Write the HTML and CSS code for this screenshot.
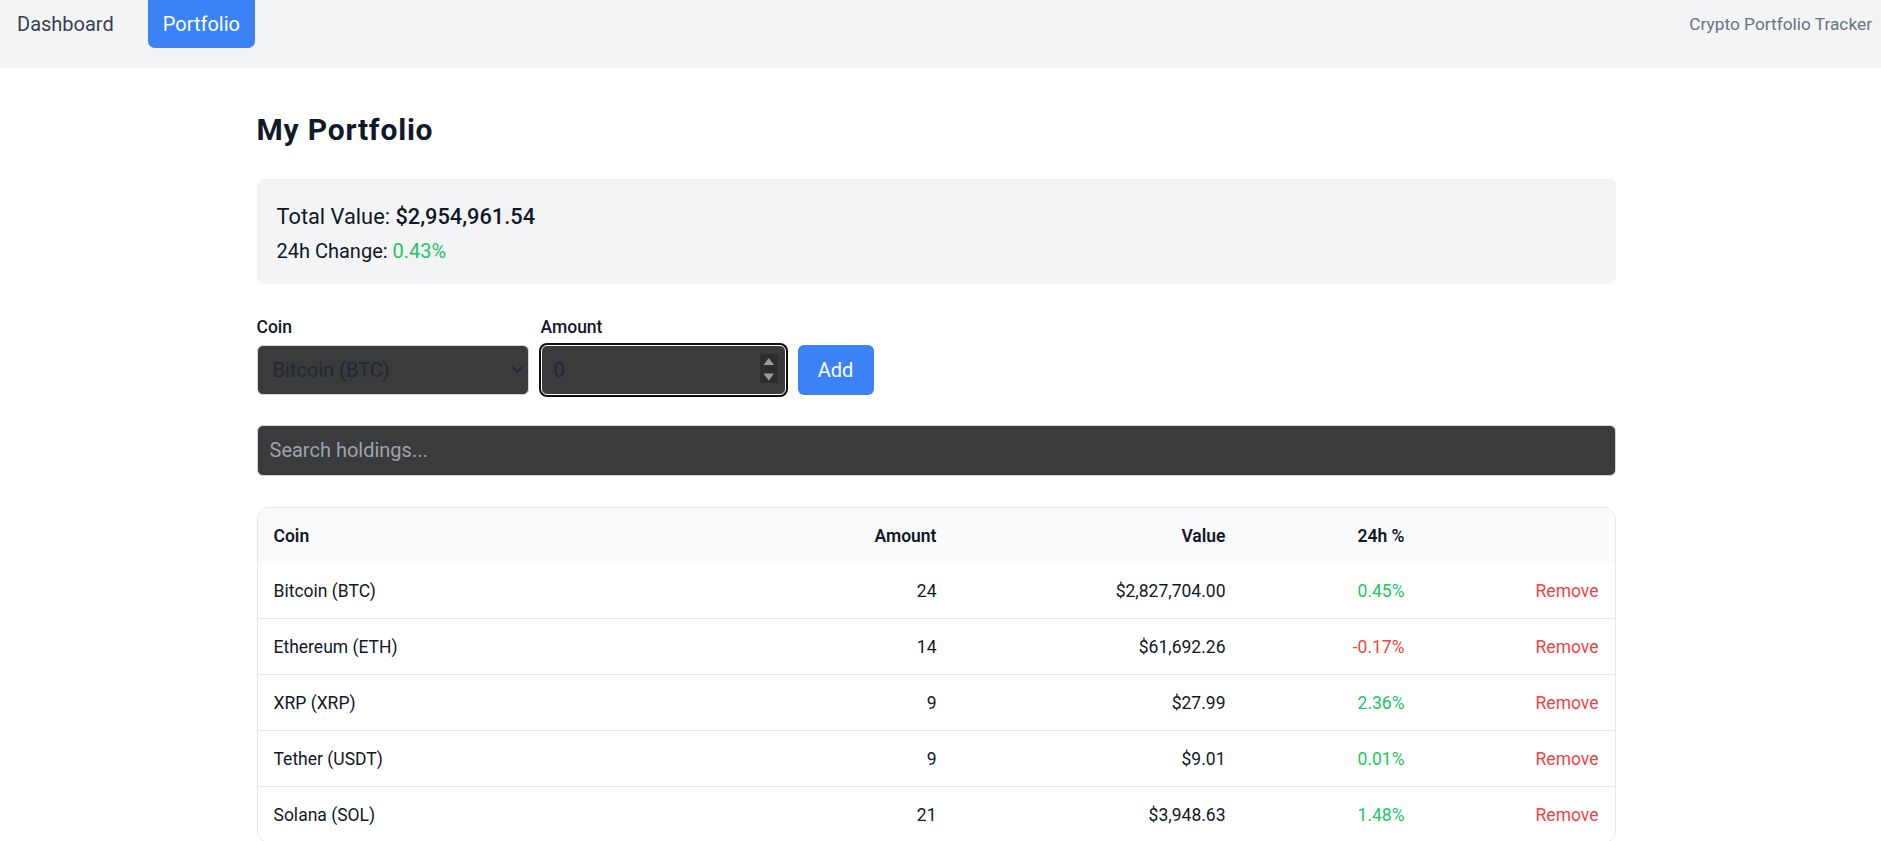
FILE: index.html
```html
<!DOCTYPE html>
<html lang="en">
<head>
<meta charset="utf-8">
<title>Crypto Portfolio Tracker</title>
<link rel="stylesheet" href="styles.css">
</head>
<body>
<nav class="topbar">
  <div class="nav-links">
    <a class="nav-link" href="#">Dashboard</a>
    <a class="nav-link active" href="#">Portfolio</a>
  </div>
  <span class="brand">Crypto Portfolio Tracker</span>
</nav>

<main class="page">
  <h1 class="title">My Portfolio</h1>

  <section class="summary">
    <div class="total">Total Value: <strong>$2,954,961.54</strong></div>
    <div class="change">24h Change: <span class="up">0.43%</span></div>
  </section>

  <form class="add-form">
    <div class="field coin-field">
      <label class="field-label" for="coin">Coin</label>
      <div class="select-wrap">
        <select id="coin" class="control select">
          <option>Bitcoin (BTC)</option>
          <option>Ethereum (ETH)</option>
          <option>XRP (XRP)</option>
          <option>Tether (USDT)</option>
          <option>Solana (SOL)</option>
        </select>
        <svg class="chevron" width="12" height="8" viewBox="0 0 12 8"><path d="M1.5 1.5 L6 6 L10.5 1.5" fill="none" stroke="#1f2937" stroke-width="1.8" stroke-linecap="round" stroke-linejoin="round"/></svg>
      </div>
    </div>
    <div class="field amount-field">
      <label class="field-label" for="amount">Amount</label>
      <div class="number-wrap">
        <input id="amount" class="control number focused" type="number" value="0">
        <span class="spinner">
          <svg width="18" height="29" viewBox="0 0 18 29"><polygon points="3.5,11 14,11 8.75,4" fill="#9b9b9b"/><polygon points="3.5,19.5 14,19.5 8.75,26.5" fill="#9b9b9b"/></svg>
        </span>
      </div>
    </div>
    <button type="button" class="add-btn">Add</button>
  </form>

  <input class="control search" type="text" placeholder="Search holdings...">

  <div class="table-card">
    <table class="holdings">
      <colgroup>
        <col class="c-coin"><col class="c-amount"><col class="c-value"><col class="c-change"><col class="c-action">
      </colgroup>
      <thead>
        <tr>
          <th>Coin</th>
          <th class="num">Amount</th>
          <th class="num">Value</th>
          <th class="num">24h %</th>
          <th></th>
        </tr>
      </thead>
      <tbody>
        <tr><td>Bitcoin (BTC)</td><td class="num">24</td><td class="num">$2,827,704.00</td><td class="num up">0.45%</td><td class="num"><span class="remove">Remove</span></td></tr>
        <tr><td>Ethereum (ETH)</td><td class="num">14</td><td class="num">$61,692.26</td><td class="num down">-0.17%</td><td class="num"><span class="remove">Remove</span></td></tr>
        <tr><td>XRP (XRP)</td><td class="num">9</td><td class="num">$27.99</td><td class="num up">2.36%</td><td class="num"><span class="remove">Remove</span></td></tr>
        <tr><td>Tether (USDT)</td><td class="num">9</td><td class="num">$9.01</td><td class="num up">0.01%</td><td class="num"><span class="remove">Remove</span></td></tr>
        <tr><td>Solana (SOL)</td><td class="num">21</td><td class="num">$3,948.63</td><td class="num up">1.48%</td><td class="num"><span class="remove">Remove</span></td></tr>
      </tbody>
    </table>
  </div>
</main>
</body>
</html>
```

FILE: styles.css
```css
* { box-sizing: border-box; }

body {
  margin: 0;
  font-family: Roboto, "Liberation Sans", sans-serif;
  color: #111827;
  background: #ffffff;
}

/* top navigation */
.topbar {
  display: flex;
  justify-content: space-between;
  align-items: flex-start;
  height: 68px;
  padding: 0 9px 0 0;
  background: #f3f4f6;
}

.nav-links {
  display: flex;
  gap: 17px;
}

.nav-link {
  display: flex;
  align-items: center;
  height: 48px;
  padding: 0 17px;
  font-size: 20px;
  color: #374151;
  text-decoration: none;
}

.nav-link.active {
  padding: 0 15px;
  background: #3b82f6;
  color: #ffffff;
  border-radius: 0 0 7px 7px;
}

.brand {
  display: flex;
  align-items: center;
  height: 48px;
  font-size: 17.3px;
  color: #6b7280;
}

/* page */
.page {
  width: 1359px;
  margin-left: calc(50% - 684px);
  padding-top: 43px;
}

.title {
  margin: 0 0 30px;
  font-size: 30px;
  line-height: 37.5px;
  font-weight: 700;
  letter-spacing: 0.8px;
  color: #111827;
}

.summary {
  padding: 20px 20px 18px;
  background: #f3f4f6;
  border-radius: 7px;
}

.total {
  font-size: 21.8px;
  line-height: 35px;
}

.total strong {
  font-weight: 500;
}

.change {
  margin-top: 2px;
  font-size: 20px;
  line-height: 30px;
}

.up { color: #22c55e; }
.down { color: #ef4444; }

/* add form */
.add-form {
  display: flex;
  align-items: flex-end;
  gap: 12px;
  margin-top: 31px;
}

.field {
  display: flex;
  flex-direction: column;
}

.coin-field { width: 272px; }
.amount-field { width: 245px; }

.field-label {
  margin-bottom: 5px;
  font-size: 17.5px;
  line-height: 25px;
  font-weight: 500;
  color: #111827;
}

.control {
  display: block;
  width: 100%;
  height: 50px;
  padding: 0 12px;
  background: #3b3b3b;
  border: 1px solid #d1d5db;
  border-radius: 6px;
  font-family: inherit;
  font-size: 20px;
  color: #1f2937;
  outline: none;
}

.select-wrap,
.number-wrap {
  position: relative;
}

.select {
  -webkit-appearance: none;
  appearance: none;
  padding-left: 15px;
}

.chevron {
  position: absolute;
  right: 6px;
  top: 21px;
  pointer-events: none;
}

.number {
  -moz-appearance: textfield;
}

.number::-webkit-inner-spin-button,
.number::-webkit-outer-spin-button {
  -webkit-appearance: none;
  margin: 0;
}

.number.focused {
  border-color: #ffffff;
  box-shadow: 0 0 0 2px #101010;
}

.spinner {
  position: absolute;
  right: 8px;
  top: 9px;
  width: 18px;
  height: 29px;
  background: #2e2e2e;
}

.spinner svg { display: block; }

.add-btn {
  width: 76px;
  height: 50px;
  padding: 0;
  border: none;
  border-radius: 6px;
  background: #3b82f6;
  color: #ffffff;
  font-family: inherit;
  font-size: 20px;
}

/* search */
.search {
  height: 51px;
  margin-top: 30px;
}

.search::placeholder {
  color: #9ca3af;
}

/* table */
.table-card {
  margin-top: 31px;
  border: 1px solid #e5e7eb;
  border-radius: 12px;
  overflow: hidden;
}

.holdings {
  width: 100%;
  border-collapse: collapse;
  table-layout: fixed;
  font-size: 17.5px;
}

.c-coin { width: 400px; }
.c-amount { width: 295px; }
.c-value { width: 289px; }
.c-change { width: 179px; }
.c-action { width: 194px; }

.holdings th,
.holdings td {
  padding: 16px 16px 14px;
  line-height: 25px;
  text-align: left;
  white-space: nowrap;
}

.holdings thead tr {
  background: #f9fafb;
}

.holdings th {
  font-weight: 600;
  color: #111827;
}

.holdings td {
  color: #111827;
}

.holdings td.up { color: #22c55e; }
.holdings td.down { color: #ef4444; }

.holdings tbody tr {
  border-bottom: 1px solid #e5e7eb;
}

.holdings tbody tr:last-child {
  border-bottom: none;
}

.holdings .num {
  text-align: right;
}

.remove {
  color: #ef4444;
  cursor: pointer;
}
```
